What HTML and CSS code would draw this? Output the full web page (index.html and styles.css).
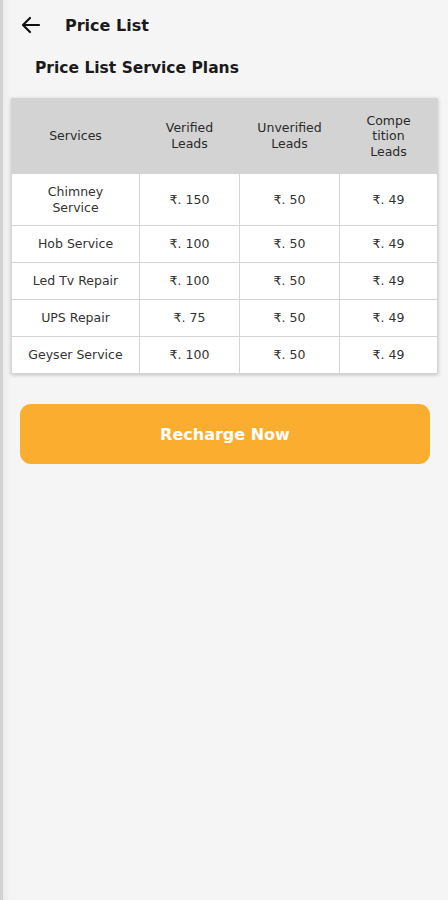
FILE: index.html
```html
<!DOCTYPE html>
<html lang="en">
<head>
    <meta charset="UTF-8">
    <meta name="viewport" content="width=device-width, initial-scale=1.0">
    <title>Price List</title>
    <link rel="stylesheet" href="styles.css">
</head>
<body>

<div id="screen">
    <div class="top-bar">
        <svg class="back-icon" width="24" height="24" viewBox="0 0 24 24">
            <path d="M20 12H5M11 5l-7 7 7 7" fill="none" stroke="#111" stroke-width="2.2" stroke-linecap="round" stroke-linejoin="round"/>
        </svg>
        <h1>Price List</h1>
    </div>

    <h2>Price List Service Plans</h2>

    <table class="price-table">
        <thead>
            <tr>
                <th>Services</th>
                <th>Verified<br>Leads</th>
                <th>Unverified<br>Leads</th>
                <th>Compe<br>tition<br>Leads</th>
            </tr>
        </thead>
        <tbody>
            <tr class="tall">
                <td>Chimney<br>Service</td>
                <td>₹. 150</td>
                <td>₹. 50</td>
                <td>₹. 49</td>
            </tr>
            <tr>
                <td>Hob Service</td>
                <td>₹. 100</td>
                <td>₹. 50</td>
                <td>₹. 49</td>
            </tr>
            <tr>
                <td>Led Tv Repair</td>
                <td>₹. 100</td>
                <td>₹. 50</td>
                <td>₹. 49</td>
            </tr>
            <tr>
                <td>UPS Repair</td>
                <td>₹. 75</td>
                <td>₹. 50</td>
                <td>₹. 49</td>
            </tr>
            <tr>
                <td>Geyser Service</td>
                <td>₹. 100</td>
                <td>₹. 50</td>
                <td>₹. 49</td>
            </tr>
        </tbody>
    </table>

    <button class="recharge-btn" type="button">Recharge Now</button>
</div>

</body>
</html>
```

FILE: styles.css
```css
body {
    margin: 0;
    padding: 0;
    background: #f5f5f5;
    font-family: 'DejaVu Sans', 'Noto Sans', sans-serif;
    color: #222;
}

#screen {
    min-height: 900px;
    border-left: 3px solid #d2d2d2;
    box-sizing: border-box;
    box-shadow: inset 8px 0 8px -6px rgba(0, 0, 0, 0.06);
}

.top-bar {
    height: 50px;
    display: flex;
    align-items: center;
    padding-left: 16px;
}

.back-icon {
    display: block;
}

.top-bar h1 {
    margin: 0 0 0 22px;
    font-size: 16px;
    font-weight: bold;
    color: #1a1a1a;
}

h2 {
    margin: 0;
    padding: 9px 0 0 32px;
    height: 48px;
    box-sizing: border-box;
    font-size: 15.5px;
    font-weight: bold;
    color: #1a1a1a;
}

.price-table {
    margin-left: 8px;
    width: 427px;
    border-collapse: collapse;
    background: #fff;
    box-shadow: 0 1px 4px rgba(0, 0, 0, 0.22);
    font-size: 12.5px;
    color: #333;
}

.price-table th,
.price-table td {
    border: 1px solid #d4d4d4;
    text-align: center;
    padding: 0 4px;
    line-height: 16px;
}

.price-table th {
    background: #d3d3d3;
    font-weight: normal;
    font-size: 12.5px;
    height: 74px;
    color: #2a2a2a;
}

.price-table th:nth-child(4) {
    line-height: 15.5px;
}

.price-table th:nth-child(1) { width: 119px; }
.price-table th:nth-child(2) { width: 91px; }
.price-table th:nth-child(3) { width: 91px; }

.price-table td {
    height: 36px;
}

.price-table tr.tall td {
    height: 51px;
}

.recharge-btn {
    display: block;
    margin: 30px 0 0 17px;
    width: 410px;
    height: 60px;
    border: none;
    border-radius: 11px;
    background: #fbad30;
    color: #fff;
    font-family: 'DejaVu Sans', sans-serif;
    font-size: 16px;
    font-weight: bold;
}
```
